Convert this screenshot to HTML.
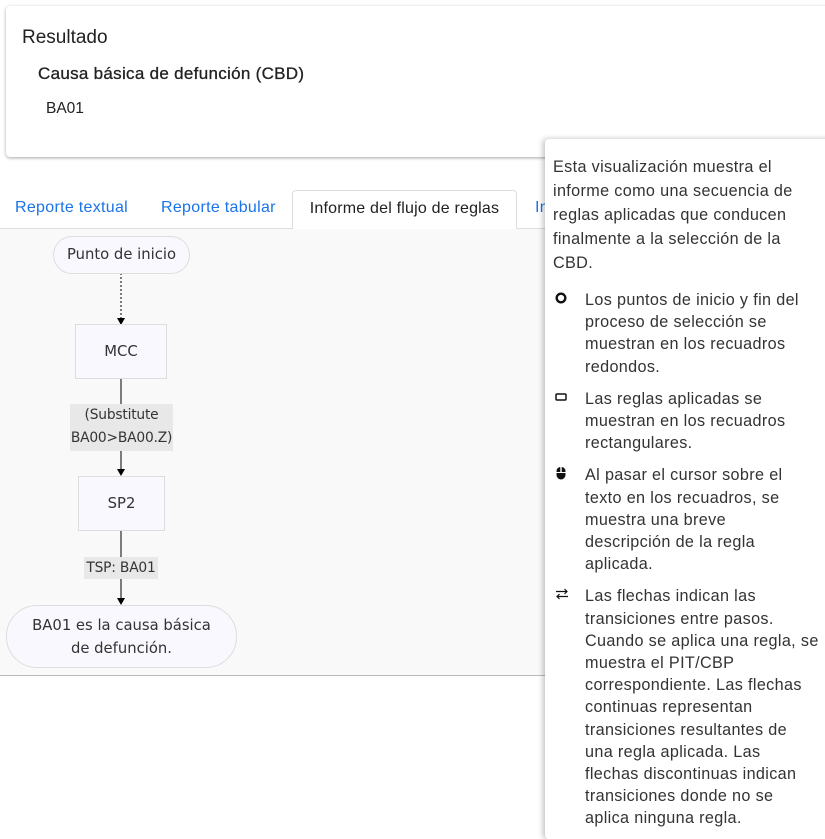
<!DOCTYPE html>
<html><head><meta charset="utf-8"><style>
*{box-sizing:border-box;margin:0;padding:0}
body{width:825px;height:833px;background:#fff;font-family:"Liberation Sans",Roboto,sans-serif;position:relative;overflow:hidden;color:#212121}
.card{position:absolute;left:6px;top:6px;width:830px;height:151px;background:#fff;border-radius:4px;box-shadow:0 1px 3px rgba(0,0,0,.35)}
.abs{position:absolute;white-space:nowrap}
.tabs{position:absolute;left:0;top:228px;width:825px;height:448px;background:#f9f9f9;border-top:1px solid #ddd;border-bottom:1px solid #bbb}
.tab{position:absolute;top:199px;font-size:16px;letter-spacing:0.3px;color:#1a73e8}
.active{position:absolute;left:292px;top:190px;width:225px;height:39px;background:#fff;border:1px solid #ddd;border-bottom:none;border-radius:4px 4px 0 0;font-size:16px;letter-spacing:0.2px;color:#212121;text-align:center;padding-top:9px}
.d{font-family:"DejaVu Sans",sans-serif;font-size:14.8px;color:#333;position:absolute;text-align:center;white-space:nowrap}
.node{background:#f8f8fe;border:1px solid #ddd}
.lbl{background:#e8e8e8;font-size:13.8px;letter-spacing:-0.2px}
.panel{position:absolute;left:545px;top:139px;width:290px;height:700px;background:#fff;border-radius:4px;box-shadow:-2px 0 6px rgba(0,0,0,.25);padding:16px 0 0 8px;font-size:16.2px;letter-spacing:0.35px;line-height:24px;color:#333;white-space:nowrap}
.item{position:relative;padding-left:32px;margin-top:10px;line-height:22.2px}
.ic{position:absolute;left:2px;top:2px}
</style></head><body>
<div class="card"></div>
<div class="abs" style="left:22px;top:27px;font-size:19px;font-weight:500;color:#222">Resultado</div>
<div class="abs" style="left:38px;top:64px;font-size:17px;letter-spacing:0.3px;color:#222;-webkit-text-stroke:0.3px #222">Causa básica de defunción (CBD)</div>
<div class="abs" style="left:46px;top:100px;font-size:15.5px">BA01</div>

<div class="tabs"></div>
<div class="tab" style="left:15px">Reporte textual</div>
<div class="tab" style="left:161px">Reporte tabular</div>
<div class="tab" style="left:535px">In</div>
<div class="active">Informe del flujo de reglas</div>

<svg style="position:absolute;left:0;top:0" width="300" height="700">
<line x1="121" y1="273" x2="121" y2="318" stroke="#000" stroke-dasharray="2,2"/>
<polygon points="117,318 125,318 121,325" fill="#000"/>
<line x1="121" y1="379" x2="121" y2="469" stroke="#000"/>
<polygon points="117,469 125,469 121,476" fill="#000"/>
<line x1="121" y1="531" x2="121" y2="598" stroke="#000"/>
<polygon points="117,598 125,598 121,605" fill="#000"/>
</svg>
<div class="d node" style="left:53px;top:236px;width:137px;height:38px;border-radius:19px;line-height:36px">Punto de inicio</div>
<div class="d node" style="left:75px;top:324px;width:92px;height:55px;line-height:53px">MCC</div>
<div class="d lbl" style="left:70px;top:404px;width:103px;height:47px;line-height:23px">(Substitute<br>BA00&gt;BA00.Z)</div>
<div class="d node" style="left:78px;top:476px;width:87px;height:55px;line-height:53px">SP2</div>
<div class="d lbl" style="left:84px;top:557px;width:74px;height:22px;line-height:22px">TSP: BA01</div>
<div class="d node" style="left:6px;top:605px;width:231px;height:63px;border-radius:31px;line-height:23px;padding-top:8px">BA01 es la causa básica<br>de defunción.</div>

<div class="panel">
<div>Esta visualización muestra el<br>informe como una secuencia de<br>reglas aplicadas que conducen<br>finalmente a la selección de la<br>CBD.</div>
<div class="item" style="margin-top:14px"><svg class="ic" width="12" height="12" style="top:3px"><circle cx="6" cy="6" r="4.3" fill="none" stroke="#111" stroke-width="2.4"/></svg>Los puntos de inicio y fin del<br>proceso de selección se<br>muestran en los recuadros<br>redondos.</div>
<div class="item"><svg class="ic" width="12" height="12" style="top:4px"><rect x="1" y="2" width="10" height="6" rx="1" fill="none" stroke="#111" stroke-width="1.5"/></svg>Las reglas aplicadas se<br>muestran en los recuadros<br>rectangulares.</div>
<div class="item"><svg class="ic" width="12" height="14" style="top:2px"><path d="M5.3 1A4 4 0 0 0 1.5 5V6H5.3ZM6.7 1A4 4 0 0 1 10.5 5V6H6.7ZM1.5 7H10.5V9A4.5 4.5 0 0 1 1.5 9Z" fill="#111"/></svg>Al pasar el cursor sobre el<br>texto en los recuadros, se<br>muestra una breve<br>descripción de la regla<br>aplicada.</div>
<div class="item"><svg class="ic" width="14" height="12" style="top:3px"><path d="M1 3.5H12M9.5 1L12 3.5L9.5 6M13 8.5H2M4.5 6L2 8.5L4.5 11" fill="none" stroke="#111" stroke-width="1.2"/></svg>Las flechas indican las<br>transiciones entre pasos.<br>Cuando se aplica una regla, se<br>muestra el PIT/CBP<br>correspondiente. Las flechas<br>continuas representan<br>transiciones resultantes de<br>una regla aplicada. Las<br>flechas discontinuas indican<br>transiciones donde no se<br>aplica ninguna regla.</div>
</div>
</body></html>
